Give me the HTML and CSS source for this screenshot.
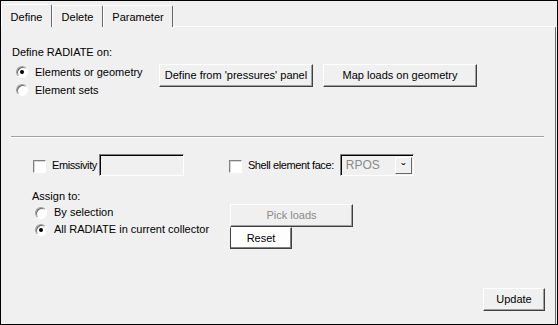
FILE: index.html
```html
<!DOCTYPE html>
<html lang="en">
<head>
  <meta charset="UTF-8" />
  <title>Radiate</title>
  <link rel="stylesheet" href="styles.css">
</head>
<body>
  <div class="window">
    <div class="tabs">
      <div class="tab active">Define</div>
      <div class="tab">Delete</div>
      <div class="tab">Parameter</div>
      <div class="tab-fill"></div>
    </div>

    <div class="panel">
      <div class="section-label">Define RADIATE on:</div>
      <div class="define-row">
        <div class="radio-group">
          <div class="radio-row"><span class="radio checked"></span>Elements or geometry</div>
          <div class="radio-row"><span class="radio"></span>Element sets</div>
        </div>
        <button class="btn wide">Define from 'pressures' panel</button>
        <button class="btn wide">Map loads on geometry</button>
      </div>

      <div class="separator"></div>

      <div class="options-row">
        <span class="check"></span>
        <span class="opt-text">Emissivity</span>
        <div class="field emissivity"></div>
        <span class="check shell"></span>
        <span class="opt-text">Shell element face:</span>
        <div class="field combo">
          <span class="combo-value">RPOS</span>
          <span class="combo-btn">&#711;</span>
        </div>
      </div>

      <div class="assign-label">Assign to:</div>
      <div class="assign-row">
        <div class="assign-radios">
          <div class="radio-row"><span class="radio"></span>By selection</div>
          <div class="radio-row"><span class="radio checked"></span>All RADIATE in current collector</div>
        </div>
        <div class="assign-buttons">
          <button class="btn pick" disabled>Pick loads</button>
          <button class="btn reset">Reset</button>
        </div>
      </div>

      <div class="footer">
        <button class="btn update">Update</button>
      </div>
    </div>
  </div>
</body>
</html>
```

FILE: styles.css
```css
* {
  box-sizing: border-box;
}
body {
  margin: 0;
  font-family: "Liberation Sans", Arial, sans-serif;
  font-size: 11px;
  line-height: 13px;
  color: #000;
  background: #f0f0f0;
}
.window {
  width: 558px;
  height: 325px;
  border: 1px solid #000;
  background: #f0f0f0;
  display: flex;
  flex-direction: column;
}

/* tabs */
.tabs {
  display: flex;
  align-items: flex-end;
  height: 26px;
  flex-shrink: 0;
}
.tab {
  height: 22px;
  padding-top: 5px;
  text-align: center;
  border-top: 1px solid #fff;
  border-left: 1px solid #fff;
  border-right: 1px solid #696969;
  border-top-right-radius: 2px;
}
.tab.active {
  height: 23px;
  width: 51px;
  padding-top: 6px;
}
.tab:nth-child(2) {
  width: 51px;
}
.tab:nth-child(3) {
  width: 70px;
}
.tab-fill {
  flex: 1;
  height: 1px;
  border-bottom: 1px solid #fff;
  margin-right: 1px;
}

/* panel */
.panel {
  flex: 1;
  display: flex;
  flex-direction: column;
  margin-right: 1px;
  border-right: 1px solid #696969;
  padding: 19px 10px 13px 11px;
}
.define-row {
  display: flex;
  margin-top: 4px;
}
.radio-group {
  width: 147px;
  padding-left: 4px;
}
.radio-row {
  display: flex;
  align-items: center;
  height: 18px;
}
.radio {
  position: relative;
  width: 12px;
  height: 12px;
  margin-right: 7px;
  border-radius: 50%;
  background: #fff;
  border: 1px solid;
  border-color: #a0a0a0 #fff #fff #a0a0a0;
  box-shadow: inset 1px 1px 0 #696969;
}
.radio.checked::after {
  content: "";
  position: absolute;
  left: 3px;
  top: 3px;
  width: 4px;
  height: 4px;
  border-radius: 50%;
  background: #000;
}

/* buttons */
.btn {
  font: inherit;
  color: #000;
  background: #f0f0f0;
  height: 23px;
  padding: 0;
  border: 1px solid;
  border-color: #fff #404040 #404040 #fff;
  box-shadow: inset -1px -1px 0 #a0a0a0;
}
.btn.wide {
  width: 154px;
  margin-top: 1px;
}
.btn.wide + .btn.wide {
  margin-left: 10px;
}

.separator {
  margin: 37px 1px 0 -1px;
  border-top: 1px solid #a0a0a0;
  border-bottom: 1px solid #fff;
}

/* options */
.options-row {
  display: flex;
  align-items: center;
  height: 23px;
  margin-top: 15px;
  padding-left: 21px;
}
.check {
  width: 13px;
  height: 13px;
  margin-right: 6px;
  margin-top: 3px;
  background: #fff;
  border: 1px solid;
  border-color: #808080 #fff #fff #808080;
  box-shadow: inset 1px 1px 0 #d4d4d4;
}
.check.shell {
  margin-left: 45px;
  margin-top: 4px;
}
.opt-text {
  margin-top: 2px;
  letter-spacing: -0.4px;
}
.field {
  height: 22px;
  border: 1px solid;
  border-color: #808080 #fff #fff #808080;
  box-shadow: inset 1px 1px 0 #000;
}
.emissivity {
  width: 85px;
  margin-left: 2px;
}
.combo {
  width: 74px;
  margin-left: 6px;
  margin-top: 1px;
  display: flex;
  align-items: stretch;
  padding: 2px 1px 1px 2px;
}
.combo-value {
  flex: 1;
  color: #8a8a8a;
  padding: 2px 0 0 3px;
  font-size: 12px;
}
.combo-btn {
  width: 17px;
  text-align: center;
  font-size: 13px;
  line-height: 22px;
  border: 1px solid;
  border-color: #fff #696969 #696969 #fff;
}

/* assign */
.assign-label {
  margin-top: 14px;
  padding-left: 20px;
}
.assign-row {
  display: flex;
  margin-top: 1px;
}
.assign-radios {
  width: 218px;
  padding-left: 23px;
}
.assign-radios .radio-row {
  height: 17px;
}
.assign-buttons {
  display: flex;
  flex-direction: column;
  align-items: flex-start;
}
.btn.pick {
  width: 123px;
  color: #8a8a8a;
}
.btn.reset {
  width: 62px;
  height: 22px;
  background: #fff;
  border-color: #fff #404040 #404040 #404040;
  box-shadow: inset -1px -1px 0 #808080;
}

.footer {
  margin-top: auto;
  display: flex;
  justify-content: flex-end;
}
.btn.update {
  width: 62px;
}
```
